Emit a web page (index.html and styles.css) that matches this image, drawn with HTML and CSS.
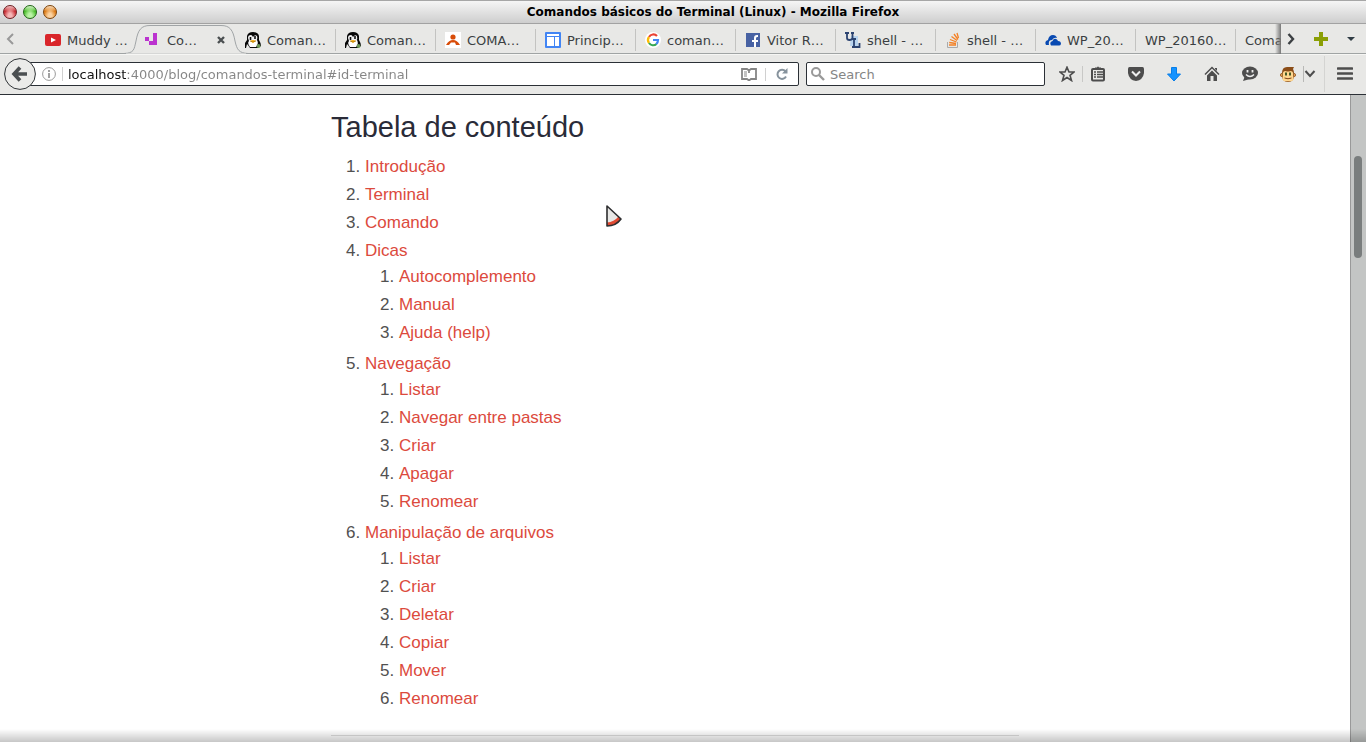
FILE: index.html
```
<!DOCTYPE html>
<html lang="pt-BR">
<head>
<meta charset="utf-8">
<title>Comandos básicos do Terminal (Linux)</title>
<link rel="stylesheet" href="styles.css">
</head>
<body>
<svg class="defs" aria-hidden="true">
  <defs>
    <symbol id="tux" viewBox="0 0 16 16">
      <path d="M0 16V11L2 8V4Q3 0 8 0T14 4V8Q16 11 16 14L13 16H10L5 16Q3 13 2 12L1 16Z" fill="#080808"/>
      <path d="M4 9Q2 11 5 15H11Q14 12 12 8Z" fill="#fff"/>
      <path d="M3 6Q3 3 6 3Q7 3 8 5Q10 2 12 4Q13 7 11 9H4Z" fill="#f2f2f2"/>
      <path d="M5.500 5V8M10 4V7" stroke="#111" stroke-width="1.600"/>
      <path d="M5 9Q8 7 11 9L8 11Z" fill="#f3af16"/>
      <path d="M5 9L8 10L11 9" stroke="#9b6500" stroke-width=".6" fill="none"/>
      <circle cx="13.500" cy="14" r="2" fill="#6d9858"/>
    </symbol>
  </defs>
</svg>
<header class="chrome">
  <div class="titlebar">
    <div class="lights">
      <button class="light red" aria-label="Close window"></button>
      <button class="light green" aria-label="Minimize window"></button>
      <button class="light orange" aria-label="Maximize window"></button>
    </div>
    <div class="window-title">Comandos básicos do Terminal (Linux) - Mozilla Firefox</div>
  </div>

  <div class="tabstrip">
    <button class="scroll-left" aria-label="Scroll tabs left"><svg width="8" height="12" viewBox="0 0 8 12"><path d="M7 1L2 6L7 11" fill="none" stroke="#999" stroke-width="2"/></svg></button>
    <div class="tabs">
      <button class="tab"><svg class="ico" viewBox="0 0 16 16"><rect y="2" width="16" height="12" rx="2" fill="#d9252a"/><path d="M6 5.500L11 8L6 10.500Z" fill="#fff"/></svg><span>Muddy …</span></button>
      <div class="tab active">
        <svg class="tab-shape" viewBox="0 0 126 30"><path d="M0 29.500C10 29 10 26 12 17C14 6 17 1.500 26 1.500H97C106 1.500 109 6 111 17C113 26 115 29 124 29.500" fill="#e8e8e6" stroke="#a0a4a6"/><path d="M2 30H122" stroke="#e8e8e6"/></svg>
        <svg class="ico" viewBox="0 0 16 16"><path d="M0 5H4V9H8V1H12V13H4V9H0Z" fill="#bb33cf"/><path d="M4 1H8V9H4Z" fill="#e8e8e6"/></svg><button class="tab-title">Co…</button>
        <button class="tab-close" aria-label="Close tab"><svg width="8" height="8" viewBox="0 0 8 8"><path d="M1 1L7 7M7 1L1 7" stroke="#4b4f51" stroke-width="2.400"/></svg></button>
      </div>
      <button class="tab"><svg class="ico"><use href="#tux"/></svg><span>Coman…</span></button>
      <button class="tab"><svg class="ico"><use href="#tux"/></svg><span>Coman…</span></button>
      <button class="tab"><svg class="ico" viewBox="0 0 16 16"><rect width="16" height="16" fill="#fff"/><circle cx="8" cy="5" r="2.600" fill="#d84c08"/><path d="M1 13Q4 8 8 8T15 13L11 13L10 10.500H6L4 13Z" fill="#d84c08"/></svg><span>COMA…</span></button>
      <button class="tab"><svg class="ico" viewBox="0 0 16 16"><rect width="16" height="16" rx="1" fill="#4285f4"/><path d="M2 2H14V4H2ZM2 5H9V14H2ZM10 5H14V14H10Z" fill="#fff"/></svg><span>Princip…</span></button>
      <button class="tab"><svg class="ico" viewBox="0 0 16 16"><circle cx="8" cy="8" r="8" fill="#fff"/><g fill="none" stroke-width="2.200"><path d="M4 5A5 5 0 0 1 12 4" stroke="#ea4335"/><path d="M4 5A5 5 0 0 0 4 11" stroke="#fbbc05"/><path d="M4 11A5 5 0 0 0 11.500 12" stroke="#34a853"/><path d="M8 8H13Q13 10.500 11.300 12" stroke="#4285f4"/></g></svg><span>coman…</span></button>
      <button class="tab"><svg class="ico" viewBox="0 0 16 16"><rect x="1" y="1" width="14" height="14" fill="#4862a3"/><path d="M9 15V10H7V8H9V6Q9 3 12 3H13V5H12Q11 5 11 6.500V8H13V10H11V15Z" fill="#fff"/></svg><span>Vitor R…</span></button>
      <button class="tab"><svg class="ico" viewBox="0 0 16 16"><path d="M6 4H13V14H5Z" fill="#b9d4ee"/><path d="M0 1H4M6 1H9M2 1V6Q2 8 4.500 8T7.500 6V1M7 7H11M9 7V15M7 15H14.500V11" fill="none" stroke="#2b4370" stroke-width="1.800"/></svg><span>shell - …</span></button>
      <button class="tab"><svg class="ico" viewBox="0 0 16 16"><path d="M2.500 10V15.500H12.500V10" fill="none" stroke="#aaa"/><path d="M4 13H11M4.200 10.500L11 11.500M5 7.500L11.500 10M6.500 4.500L12 8.500M9 2L13 7.500M12 1L13.500 6" stroke="#f48024" stroke-width="1.300"/></svg><span>shell - …</span></button>
      <button class="tab"><svg class="ico" viewBox="0 0 16 16"><path d="M1 13Q-1 9 3 8Q4 3 8 3Q11 3 12 6Q9 5 7 8Q3 8 4 13Z" fill="#094ab2"/><path d="M6 13.500Q4 10 7.500 9Q9 5.500 12 7.500L13 9Q16 9 16 12Q15.500 13.500 14 13.500Z" fill="#094ab2"/></svg><span>WP_20…</span></button>
      <button class="tab"><span>WP_20160…</span></button>
      <button class="tab"><span>Coman…</span></button>
    </div>
    <div class="strip-tools">
      <button aria-label="Scroll tabs right"><svg width="8" height="12" viewBox="0 0 8 12"><path d="M1.500 1L6 6L1.500 11" fill="none" stroke="#3c4043" stroke-width="2.400"/></svg></button>
      <button aria-label="New tab"><svg width="14" height="14" viewBox="0 0 14 14"><path d="M5 0H9V5H14V9H9V14H5V9H0V5H5Z" fill="#8b9f06"/></svg></button>
      <button aria-label="List all tabs"><svg width="8" height="4" viewBox="0 0 8 4"><path d="M0 0H8L4 4Z" fill="#303c45"/></svg></button>
    </div>
  </div>

  <div class="navbar">
    <div class="location">
      <button class="back" aria-label="Back"><svg width="32" height="32" viewBox="0 0 32 32"><circle cx="16" cy="16" r="15.400" fill="#ebebe9" stroke="#303437"/><path d="M16 9.500L10 16L16 22.500M11 16H23" fill="none" stroke="#4b4f51" stroke-width="3.600"/></svg></button>
      <div class="urlbar">
        <button class="info" aria-label="Site information"><svg width="14" height="14" viewBox="0 0 14 14"><circle cx="7" cy="7" r="6.400" fill="none" stroke="#9a9a9a"/><path d="M7 6V11" stroke="#8a8a8a" stroke-width="1.600"/><path d="M7 3V5" stroke="#8a8a8a" stroke-width="1.600"/></svg></button>
        <input class="url" type="text" aria-label="Address" value="localhost:4000/blog/comandos-terminal#id-terminal">
        <button class="reader" aria-label="Reader view"><svg width="16" height="13" viewBox="0 0 16 13"><path d="M1 1H6L8 2.500L10 1H15V11H10L8 12.500L6 11H1ZM8 3V5" fill="none" stroke="#858585" stroke-width="1.800"/><path d="M3 4H6M3 6H6M3 8H6" stroke="#858585"/></svg></button>
        <button class="reload" aria-label="Reload"><svg width="12" height="12" viewBox="0 0 12 12"><path d="M9.500 3.500A4.500 4.500 0 1 0 10 8.500" fill="none" stroke="#87939d" stroke-width="2"/><path d="M6 5.500H11.500V0Z" fill="#87939d"/></svg></button>
      </div>
    </div>
    <div class="searchbar">
      <svg width="14" height="14" viewBox="0 0 14 14"><circle cx="5" cy="5" r="4" fill="none" stroke="#999" stroke-width="2"/><path d="M8 8L13 13" stroke="#999" stroke-width="2.400"/></svg>
      <input type="text" placeholder="Search" aria-label="Search">
    </div>
    <div class="tools">
      <button class="tool star" aria-label="Bookmark"><svg viewBox="0 0 16 16"><path d="M8 1.200L10 6H15L11 9.300L12.500 14.500L8 11.500L3.500 14.500L5 9.300L1 6H6Z" fill="none" stroke="#4d4d4d" stroke-width="1.600"/></svg></button>
      <button class="tool clip" aria-label="Bookmarks list"><svg viewBox="0 0 16 16"><path d="M5 3V1.500H7Q8 -.5 9 1.500H11V3Z" fill="#4d4d4d"/><rect x="2" y="3" width="12" height="11.500" rx="1" fill="none" stroke="#4d4d4d" stroke-width="2"/><path d="M4 6H6M7 6H13M4 8.500H6M7 8.500H13M4 11H6M7 11H13" stroke="#4d4d4d" stroke-width="1.300"/></svg></button>
      <button class="tool" aria-label="Pocket"><svg viewBox="0 0 16 16"><path d="M1.500 1H14.500Q16 1 16 3V7Q15 14 8 15Q1 14 0 7V3Q0 1 1.500 1Z" fill="#4d4d4d"/><path d="M4 5.500L8 9.500L12 5.500" fill="none" stroke="#eee" stroke-width="2"/></svg></button>
      <button class="tool" aria-label="Downloads"><svg viewBox="0 0 16 16"><path d="M5.500 1.500H10.500V8H14.500L8 15L1.500 8H5.500Z" fill="#1593ff" stroke="#087ee8"/></svg></button>
      <button class="tool" aria-label="Home"><svg viewBox="0 0 16 16"><path d="M1 8.500L8 1.500L15 8.500" fill="none" stroke="#4d4d4d" stroke-width="1.500"/><path d="M3 9.500L8 4.500L13 9.500V15H9.500V10H6.500V15H3ZM11 2H13V5L11 3Z" fill="#4d4d4d"/></svg></button>
      <button class="tool" aria-label="Chat"><svg viewBox="0 0 16 16"><ellipse cx="8" cy="7" rx="8" ry="6.500" fill="#4d4d4d"/><path d="M3 10L1 15L8 13Z" fill="#4d4d4d"/><path d="M5.500 4V6.500M10.500 4V6.500" stroke="#eee" stroke-width="1.800"/><path d="M4 8.500Q8 12.500 12 8.500" fill="none" stroke="#eee" stroke-width="1.400"/></svg></button>
      <button class="tool monkey" aria-label="Greasemonkey"><svg viewBox="0 0 16 16"><circle cx="2" cy="9" r="1.600" fill="#e6a454" stroke="#8b4d18" stroke-width=".8"/><circle cx="14" cy="9" r="1.600" fill="#e6a454" stroke="#8b4d18" stroke-width=".8"/><path d="M2 7Q2 1 7 1H14L13 3Q14 5 14 7V11Q13 16 8 16T2 11Z" fill="#8b4d18"/><path d="M2.800 7Q4 4 7 5.500H9Q12 4 13.200 7V10Q14.500 15 11 15.200H5Q1.500 15 2.800 10Z" fill="#ffd68e"/><path d="M6 6.500V9.500M10 6.500V9.500" stroke="#2f4d1c" stroke-width="1.800"/><path d="M4.500 12Q8 13.500 11.500 12" fill="none" stroke="#814017"/></svg></button>
      <button class="tool chev" aria-label="More"><svg viewBox="0 0 12 8"><path d="M1.500 1L6 6L10.500 1" fill="none" stroke="#4d4d4d" stroke-width="2"/></svg></button>
      <button class="tool menu" aria-label="Menu"><svg viewBox="0 0 16 16"><path d="M1 2.500H15M1 7.500H15M1 12.500H15" stroke="#4d4d4d" stroke-width="2.600" stroke-linecap="round"/></svg></button>
    </div>
  </div>
</header>

<div class="viewport">
  <main class="page">
    <article class="content">
      <h2>Tabela de conteúdo</h2>
      <ol class="toc">
        <li><a href="#intro">Introdução</a></li>
        <li><a href="#id-terminal">Terminal</a></li>
        <li><a href="#comando">Comando</a></li>
        <li><a href="#dicas">Dicas</a>
          <ol>
            <li><a href="#auto">Autocomplemento</a></li>
            <li><a href="#manual">Manual</a></li>
            <li><a href="#help">Ajuda (help)</a></li>
          </ol>
        </li>
        <li><a href="#navegacao">Navegação</a>
          <ol>
            <li><a href="#listar">Listar</a></li>
            <li><a href="#navegar">Navegar entre pastas</a></li>
            <li><a href="#criar">Criar</a></li>
            <li><a href="#apagar">Apagar</a></li>
            <li><a href="#renomear">Renomear</a></li>
          </ol>
        </li>
        <li><a href="#arquivos">Manipulação de arquivos</a>
          <ol>
            <li><a href="#arq-listar">Listar</a></li>
            <li><a href="#arq-criar">Criar</a></li>
            <li><a href="#arq-deletar">Deletar</a></li>
            <li><a href="#arq-copiar">Copiar</a></li>
            <li><a href="#arq-mover">Mover</a></li>
            <li><a href="#arq-renomear">Renomear</a></li>
          </ol>
        </li>
      </ol>
      <hr>
    </article>
  </main>
  <div class="scrollbar"><div class="thumb"></div></div>
</div>
<div class="dock-shadow"></div>
<svg class="cursor" viewBox="0 0 18 24"><path d="M2 2L16 15Q11 22 2 22Z" fill="#e8e8e6"/><path d="M2 18.500Q9 18 13.500 12.500L16 15Q11 22 2 22Z" fill="#e04a33"/><path d="M2 2L16 15Q11 22 2 22Z" fill="none" stroke="#2d2d2f" stroke-width="1.600" stroke-linejoin="round"/></svg>
</body>
</html>
```
FILE: styles.css
```
* { box-sizing: border-box; }
html, body { height: 100%; }
body {
  margin: 0;
  display: flex;
  flex-direction: column;
  overflow: hidden;
  background: #fff;
  font-family: "DejaVu Sans", sans-serif;
  font-size: 13px;
  color: #3b3f42;
}
button { border: 0; padding: 0; margin: 0; background: none; font: inherit; color: inherit; }
svg { display: block; flex: none; }
.defs { position: absolute; width: 0; height: 0; }
.chrome { flex: none; background: #e8e8e6; border-bottom: 1px solid #2b3036; }

.titlebar {
  height: 24px;
  display: grid;
  grid-template-columns: 60px 1fr;
  align-items: center;
  border-top: 1px solid #a6a6a6;
  border-bottom: 1px solid #a2a2a2;
  background: linear-gradient(#f5f5f5, #cecece);
}
.lights { display: flex; gap: 6px; padding-left: 3px; }
.light { width: 14px; height: 14px; border-radius: 50%; border: 1px solid; }
.red { border-color: #6d1d20; background: radial-gradient(ellipse at 50% 85%, #f5b5b5 20%, transparent 65%), linear-gradient(#f3c3c4, #c92c33 45%, #df6c70); }
.green { border-color: #1e6412; background: radial-gradient(ellipse at 50% 85%, #baf2a4 20%, transparent 65%), linear-gradient(#d7f5cd, #4bbd2b 45%, #86dd6c); }
.orange { border-color: #7c4108; background: radial-gradient(ellipse at 50% 85%, #fbd2a0 20%, transparent 65%), linear-gradient(#f9dfc0, #dd7a15 45%, #eda758); }
.window-title {
  text-align: center;
  font-weight: bold;
  font-size: 12px;
  line-height: 20px;
  color: #000;
}

.tabstrip { height: 30px; display: flex; box-shadow: inset 0 -1px #a0a4a4; }
.scroll-left { width: 21px; padding-left: 6px; flex: none; }
.tabs { flex: 1; min-width: 0; display: flex; padding-left: 14px; overflow: hidden; position: relative; }
.tabs::after {
  content: "";
  position: absolute;
  right: 0; top: 0; bottom: 0;
  width: 6px;
  background: linear-gradient(90deg, transparent, #777);
}
.tab {
  flex: none;
  width: 100px;
  display: flex;
  align-items: center;
  gap: 6px;
  padding: 2px 0 0 10px;
  white-space: nowrap;
  text-align: left;
}
.tab:nth-child(n+4) { background: linear-gradient(#c3c3c1, #c3c3c1) left 5px / 1px 22px no-repeat; }
.tab.active { position: relative; }
.tab.active > * { position: relative; }
.tab.active > .tab-shape { position: absolute; left: -11px; top: 0; width: 126px; height: 30px; }
.tab-title { flex: 1; text-align: left; }
.tab-close { padding-right: 10px; }
.ico { width: 16px; height: 16px; }
.strip-tools { flex: none; width: 85px; display: flex; align-items: center; justify-content: space-between; padding: 0 11px 0 6px; }

.navbar { height: 40px; display: flex; align-items: center; border-top: 1px solid #f6f6f4; padding-bottom: 1px; }
.location { flex: 1; min-width: 0; display: flex; align-items: center; padding-left: 4px; }
.back { position: relative; margin-right: -18px; }
.urlbar, .searchbar { height: 24px; display: flex; align-items: center; background: #fff; border: 1px solid #2b3036; border-radius: 2px; }
.urlbar { flex: 1; min-width: 0; padding-left: 23px; }
.urlbar .info { padding-right: 6px; border-right: 1px solid #d0d0d0; }
input { border: 0; outline: 0; margin: 0; font: inherit; flex: 1; min-width: 0; height: 20px; }
.url {
  padding: 0 0 0 5px;
  color: transparent;
  background: linear-gradient(90deg, #111 64px, #858585 64px) text;
}
.reader { padding-right: 8px; border-right: 1px solid #d0d0d0; }
.reload { padding: 0 10px; }
.searchbar { flex: none; width: 239px; margin-left: 7px; padding-left: 4px; gap: 5px; }
.searchbar input { padding: 0; background: none; }
.searchbar input::placeholder { color: #858585; opacity: 1; }
.tools { flex: none; width: 321px; display: flex; align-items: center; padding-left: 14px; }
.tool { flex: none; }
.tool svg { width: 16px; height: 16px; }
.tool + .tool { margin-left: 22px; }
.tools .star { padding-right: 7px; border-right: 1px solid #c8c8c6; }
.tools .clip { margin-left: 7px; }
.tools .monkey { padding-right: 7px; border-right: 1px solid #b8b8b6; }
.tools .chev { margin-left: 0; padding-right: 8px; border-right: 1px solid #d4d4d2; height: 36px; }
.tools .chev svg { width: 12px; height: 8px; }
.tools .menu { margin-left: 12px; }

.viewport { flex: 1; min-height: 0; display: flex; }
.page { flex: 1; min-width: 0; overflow: hidden; }
.content {
  max-width: 688px;
  margin: 0 auto;
  padding-top: 15px;
  font: 17px/25px "Liberation Sans", Arial, sans-serif;
  color: #515151;
}
h2 { margin: 0 0 9px; font-size: 29px; line-height: 35px; font-weight: 400; color: #2a2b38; }
ol { margin: 0; padding-left: 34px; }
li { margin-bottom: 3px; }
li ol { display: flow-root; padding-top: 1px; }
a { color: #dc4a3d; text-decoration: none; }
hr { margin: 21px 0 0; border: 0; border-top: 1px solid #dedede; }
.scrollbar { flex: none; width: 16px; padding: 61px 3px 0; background: #c3c5c4; border-left: 1px solid #999; }
.thumb { width: 8px; height: 102px; border-radius: 4px; background: #797d7d; }
.dock-shadow { position: fixed; left: 0; right: 0; bottom: 0; height: 13px; background: linear-gradient(transparent, rgba(0, 0, 0, .22)); }
.cursor { position: absolute; left: 605px; top: 204px; width: 18px; height: 24px; }
```
